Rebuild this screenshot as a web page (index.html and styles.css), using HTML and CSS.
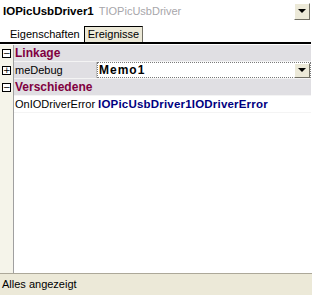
FILE: index.html
```html
<!DOCTYPE html>
<html>
<head>
<meta charset="utf-8">
<link rel="stylesheet" href="styles.css">
</head>
<body>
<div class="inspector">
  <div class="combo">
    <span class="obj-name">IOPicUsbDriver1</span>
    <span class="obj-type">TIOPicUsbDriver</span>
    <span class="drop-btn"><span class="arrow"></span></span>
  </div>
  <div class="tabs">
    <span class="tab">Eigenschaften</span>
    <span class="tab active">Ereignisse</span>
  </div>
  <div class="grid">
    <div class="gutter">
      <div class="g-row"><span class="box">&#8722;</span></div>
      <div class="g-row"><span class="box">+</span></div>
      <div class="g-row"><span class="box">&#8722;</span></div>
      <div class="g-row"></div>
    </div>
    <div class="rows">
      <div class="row cat"><span class="cat-name">Linkage</span></div>
      <div class="row prop">
        <span class="name">meDebug</span>
        <span class="value editing"><span class="val-text">Memo1</span><span class="drop-btn small"><span class="arrow"></span></span></span>
      </div>
      <div class="row cat"><span class="cat-name">Verschiedene</span></div>
      <div class="row prop white">
        <span class="name">OnIODriverError</span>
        <span class="value"><span class="event">IOPicUsbDriver1IODriverError</span></span>
      </div>
    </div>
  </div>
  <div class="status">Alles angezeigt</div>
</div>
</body>
</html>
```

FILE: styles.css
```css
html, body {
  margin: 0;
  padding: 0;
  background: #ffffff;
}
body {
  font-family: "Liberation Sans", Arial, sans-serif;
  font-size: 11px;
  color: #000;
}
.inspector {
  width: 312px;
  height: 295px;
  display: flex;
  flex-direction: column;
  overflow: hidden;
}
.combo {
  height: 22px;
  flex: none;
  display: flex;
  align-items: center;
  padding-left: 3px;
  padding-right: 1px;
  background: #fff;
  box-sizing: border-box;
  width: 311px;
}
.obj-name {
  font-weight: bold;
  font-size: 11.5px;
}
.obj-type {
  color: #a7a6aa;
  margin-left: 5px;
  flex: 1;
}
.drop-btn {
  width: 16px;
  height: 17px;
  box-sizing: border-box;
  background: #ece9d8;
  border: 1px solid;
  border-color: #fff #716f64 #716f64 #fff;
  display: flex;
  align-items: center;
  justify-content: center;
}
.drop-btn.small {
  height: 15px;
}
.arrow {
  width: 0;
  height: 0;
  border-left: 4px solid transparent;
  border-right: 4px solid transparent;
  border-top: 4px solid #000;
}
.tabs {
  height: 22px;
  flex: none;
  width: 311px;
  box-sizing: border-box;
  display: flex;
  align-items: flex-end;
  padding-left: 6px;
  border-bottom: 2px solid #000;
  background: #fff;
}
.tab {
  height: 15px;
  line-height: 15px;
  padding: 0 4px;
}
.tab.active {
  background: #ece9d8;
  border: 1px solid #000;
  border-bottom: none;
  border-right-color: #716f64;
  padding: 0 3px;
}
.grid {
  flex: 1;
  display: flex;
  width: 311px;
  background: #fff;
  padding-top: 1px;
}
.gutter {
  flex: none;
  background: #f5f4ea;
  border-right: 1px solid #a0a0a0;
  box-sizing: border-box;
  width: 14px;
}
.g-row {
  height: 17px;
  display: flex;
  align-items: center;
  padding-left: 2px;
}
.box {
  width: 9px;
  height: 9px;
  box-sizing: border-box;
  border: 1px solid #000;
  background: #fff;
  font-size: 9px;
  line-height: 7px;
  text-align: center;
  font-family: "DejaVu Sans", sans-serif;
}
.rows {
  flex: 1;
}
.row {
  height: 16px;
  border-bottom: 1px solid #f4f4f4;
  display: flex;
  align-items: center;
  background: #e0dfe3;
}
.row.white {
  background: #fff;
}
.cat-name {
  font-weight: bold;
  font-size: 12px;
  color: #800040;
  padding-left: 1px;
}
.name {
  width: 81px;
  flex: none;
  padding-left: 1px;
  height: 16px;
  line-height: 16px;
  border-right: 1px solid #c0c0c0;
}
.row.white .name {
  border-right-color: #fff;
}
.value {
  flex: 1;
  height: 16px;
  display: flex;
  align-items: center;
  padding-left: 1px;
}
.value.editing {
  background: #fff;
  border: 1px dotted #7a7a7a;
  box-sizing: border-box;
  padding-left: 1px;
}
.val-text {
  flex: 1;
  font-weight: bold;
  font-size: 12px;
  letter-spacing: 1px;
}
.event {
  font-weight: bold;
  font-size: 11.5px;
  letter-spacing: 0.2px;
  color: #000080;
}
.status {
  height: 21px;
  flex: none;
  background: #ece9d8;
  border-top: 1px solid #aca899;
  padding-left: 2px;
  line-height: 20px;
  width: 311px;
}
```
